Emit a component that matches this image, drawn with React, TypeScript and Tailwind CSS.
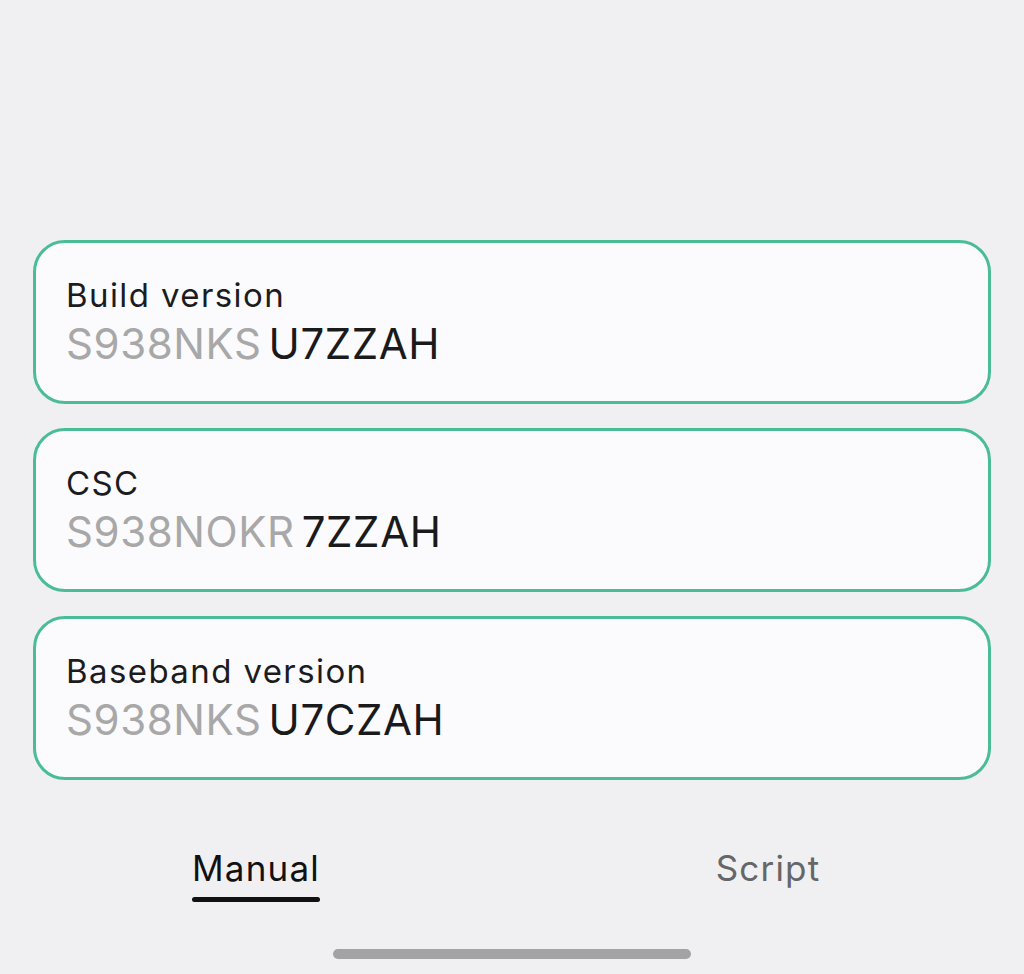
import React from "react";

const font = { fontFamily: "Inter, 'Noto Sans', sans-serif" };

function Card({ label, gray, dark }: { label: string; gray: string; dark: string }) {
  return (
    <div className="h-[164px] rounded-[32px] border-[3px] border-[#4abd97] bg-[#fbfbfd] flex flex-col justify-center pl-[30px]">
      <div className="text-[33px] leading-[40px] text-[#1c1c1e] tracking-[1.4px]">{label}</div>
      <div className="flex items-baseline text-[42px] leading-[50px] mt-[4px] tracking-[0.6px]">
        <span className="text-[#a8a8a8]">{gray}</span>
        <span className="text-[#1a1a1c] ml-[7px]">{dark}</span>
      </div>
    </div>
  );
}

export default function App() {
  return (
    <div className="w-[1024px] h-[974px] bg-[#f0f0f2] flex flex-col" style={font}>
      <div className="h-[240px]" />
      <div className="px-[33px] flex flex-col gap-[24px]">
        <Card label="Build version" gray="S938NKS" dark="U7ZZAH" />
        <Card label="CSC" gray="S938NOKR" dark="7ZZAH" />
        <Card label="Baseband version" gray="S938NKS" dark="U7CZAH" />
      </div>
      <div className="flex mt-[66px]">
        <div className="w-1/2 flex justify-center">
          <div className="flex flex-col items-center">
            <div className="text-[35px] leading-[44px] text-[#111] tracking-[1.2px]">Manual</div>
            <div className="h-[5px] w-full rounded-full bg-[#111] mt-[7px]" />
          </div>
        </div>
        <div className="w-1/2 flex justify-center">
          <div className="text-[35px] leading-[44px] text-[#666668] tracking-[1.2px]">Script</div>
        </div>
      </div>
      <div className="flex-1" />
      <div className="flex justify-center pb-[15px]">
        <div className="w-[358px] h-[10px] rounded-full bg-[#a3a3a5]" />
      </div>
    </div>
  );
}
